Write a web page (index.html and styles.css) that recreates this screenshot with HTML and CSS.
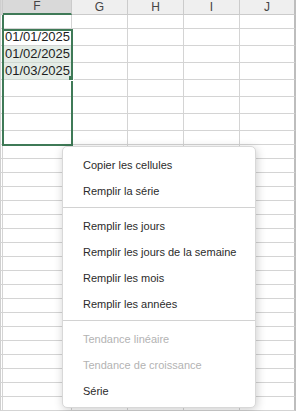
FILE: index.html
```html
<!DOCTYPE html>
<html lang="fr">
<head>
    <meta charset="UTF-8">
    <meta name="viewport" content="width=device-width, initial-scale=1.0">
    <title>Recopie incrémentée</title>
    <link rel="stylesheet" href="styles.css">
</head>
<body>
    <div class="sheet">
        <div class="row head">
            <div class="cell stub picked"></div>
            <div class="cell picked">F</div>
            <div class="cell">G</div>
            <div class="cell">H</div>
            <div class="cell">I</div>
            <div class="cell">J</div>
        </div>

        <div class="row">
            <div class="cell"></div><div class="cell col-mark"></div><div class="cell"></div><div class="cell"></div><div class="cell"></div><div class="cell"></div>
        </div>

        <div class="row tall">
            <div class="cell"></div><div class="cell date">01/01/2025</div><div class="cell"></div><div class="cell"></div><div class="cell"></div><div class="cell"></div>
        </div>
        <div class="row tall">
            <div class="cell"></div><div class="cell date filled">01/02/2025</div><div class="cell"></div><div class="cell"></div><div class="cell"></div><div class="cell"></div>
        </div>
        <div class="row tall">
            <div class="cell"></div><div class="cell date filled">01/03/2025</div><div class="cell"></div><div class="cell"></div><div class="cell"></div><div class="cell"></div>
        </div>
        <div class="row tall">
            <div class="cell"></div><div class="cell"></div><div class="cell"></div><div class="cell"></div><div class="cell"></div><div class="cell"></div>
        </div>
        <div class="row tall">
            <div class="cell"></div><div class="cell"></div><div class="cell"></div><div class="cell"></div><div class="cell"></div><div class="cell"></div>
        </div>
        <div class="row tall">
            <div class="cell"></div><div class="cell"></div><div class="cell"></div><div class="cell"></div><div class="cell"></div><div class="cell"></div>
        </div>

        <div class="row"><div class="cell"></div><div class="cell"></div><div class="cell"></div><div class="cell"></div><div class="cell"></div><div class="cell"></div></div>
        <div class="row"><div class="cell"></div><div class="cell"></div><div class="cell"></div><div class="cell"></div><div class="cell"></div><div class="cell"></div></div>
        <div class="row"><div class="cell"></div><div class="cell"></div><div class="cell"></div><div class="cell"></div><div class="cell"></div><div class="cell"></div></div>
        <div class="row"><div class="cell"></div><div class="cell"></div><div class="cell"></div><div class="cell"></div><div class="cell"></div><div class="cell"></div></div>
        <div class="row"><div class="cell"></div><div class="cell"></div><div class="cell"></div><div class="cell"></div><div class="cell"></div><div class="cell"></div></div>
        <div class="row"><div class="cell"></div><div class="cell"></div><div class="cell"></div><div class="cell"></div><div class="cell"></div><div class="cell"></div></div>
        <div class="row"><div class="cell"></div><div class="cell"></div><div class="cell"></div><div class="cell"></div><div class="cell"></div><div class="cell"></div></div>
        <div class="row"><div class="cell"></div><div class="cell"></div><div class="cell"></div><div class="cell"></div><div class="cell"></div><div class="cell"></div></div>
        <div class="row"><div class="cell"></div><div class="cell"></div><div class="cell"></div><div class="cell"></div><div class="cell"></div><div class="cell"></div></div>
        <div class="row"><div class="cell"></div><div class="cell"></div><div class="cell"></div><div class="cell"></div><div class="cell"></div><div class="cell"></div></div>
        <div class="row"><div class="cell"></div><div class="cell"></div><div class="cell"></div><div class="cell"></div><div class="cell"></div><div class="cell"></div></div>
        <div class="row"><div class="cell"></div><div class="cell"></div><div class="cell"></div><div class="cell"></div><div class="cell"></div><div class="cell"></div></div>
        <div class="row"><div class="cell"></div><div class="cell"></div><div class="cell"></div><div class="cell"></div><div class="cell"></div><div class="cell"></div></div>
        <div class="row"><div class="cell"></div><div class="cell"></div><div class="cell"></div><div class="cell"></div><div class="cell"></div><div class="cell"></div></div>
        <div class="row"><div class="cell"></div><div class="cell"></div><div class="cell"></div><div class="cell"></div><div class="cell"></div><div class="cell"></div></div>
        <div class="row"><div class="cell"></div><div class="cell"></div><div class="cell"></div><div class="cell"></div><div class="cell"></div><div class="cell"></div></div>
        <div class="row"><div class="cell"></div><div class="cell"></div><div class="cell"></div><div class="cell"></div><div class="cell"></div><div class="cell"></div></div>
        <div class="row"><div class="cell"></div><div class="cell"></div><div class="cell"></div><div class="cell"></div><div class="cell"></div><div class="cell"></div></div>
        <div class="row"><div class="cell"></div><div class="cell"></div><div class="cell"></div><div class="cell"></div><div class="cell"></div><div class="cell"></div></div>
        <div class="row"><div class="cell"></div><div class="cell"></div><div class="cell"></div><div class="cell"></div><div class="cell"></div><div class="cell"></div></div>

        <div class="selection"></div>
        <div class="fill-handle"></div>

        <ul class="menu">
            <li class="item">Copier les cellules</li>
            <li class="item">Remplir la série</li>
            <li class="sep"></li>
            <li class="item">Remplir les jours</li>
            <li class="item">Remplir les jours de la semaine</li>
            <li class="item">Remplir les mois</li>
            <li class="item">Remplir les années</li>
            <li class="sep"></li>
            <li class="item disabled">Tendance linéaire</li>
            <li class="item disabled">Tendance de croissance</li>
            <li class="item">Série</li>
        </ul>
    </div>
</body>
</html>
```

FILE: styles.css
```css
* {
    margin: 0;
    padding: 0;
    box-sizing: border-box;
    font-family: 'Liberation Sans', Arial, sans-serif;
}

body {
    background-color: #fff;
    color: #222;
    overflow: hidden;
}

.sheet {
    position: relative;
    width: 297px;
    height: 411px;
    overflow: hidden;
}

.row {
    display: grid;
    grid-template-columns: 3px 69px 56px 56px 56px 56px;
    height: 14px;
}

.row.tall {
    height: 17px;
}

.cell {
    border-right: 1px solid #d4d4d4;
    border-bottom: 1px solid #d4d4d4;
}

.row .cell:first-child {
    border-left: 1px solid #cfcfcf;
}

.row .cell:last-child {
    border-right: 2px solid #bdbdbd;
}

.head {
    height: 15px;
}

.head .cell {
    background-color: #efefef;
    border-color: #cbcbcb;
    color: #444;
    font-size: 12px;
    line-height: 14px;
    text-align: center;
}

.head .cell.picked {
    background-color: #d9d9d9;
}

.head .cell.picked:nth-child(2) {
    border-bottom: 2px solid #3f7a57;
    line-height: 13px;
}

.col-mark {
    position: relative;
}

.col-mark::before {
    content: "";
    position: absolute;
    left: -1px;
    top: 0;
    bottom: -1px;
    width: 2px;
    background-color: #3f7a57;
}

.date {
    font-size: 13px;
    line-height: 16px;
    padding-left: 2px;
    color: #1e1e1e;
}

.date.filled {
    background-color: #e4ece6;
    border-bottom-color: #cfd8d1;
}

.selection {
    position: absolute;
    left: 2px;
    top: 29px;
    width: 71px;
    height: 117px;
    border: 2px solid #3f7a57;
}

.fill-handle {
    position: absolute;
    left: 69px;
    top: 76px;
    width: 5px;
    height: 5px;
    background-color: #3f7a57;
    border: 1px solid #fff;
    border-top: 0;
    border-left: 0;
}

.menu {
    position: absolute;
    left: 62px;
    top: 146px;
    width: 194px;
    list-style: none;
    background-color: #fff;
    border: 1px solid #d8d8d8;
    border-radius: 5px;
    box-shadow: 1px 2px 10px rgba(0, 0, 0, 0.2);
    padding: 5px 0 3px;
}

.item {
    height: 26px;
    line-height: 26px;
    padding-left: 20px;
    font-size: 11px;
    color: #2b2b2b;
    white-space: nowrap;
}

.item.disabled {
    color: #b3b3b3;
}

.sep {
    height: 1px;
    margin: 3px 0 5px;
    background-color: #d2d2d2;
}
```
